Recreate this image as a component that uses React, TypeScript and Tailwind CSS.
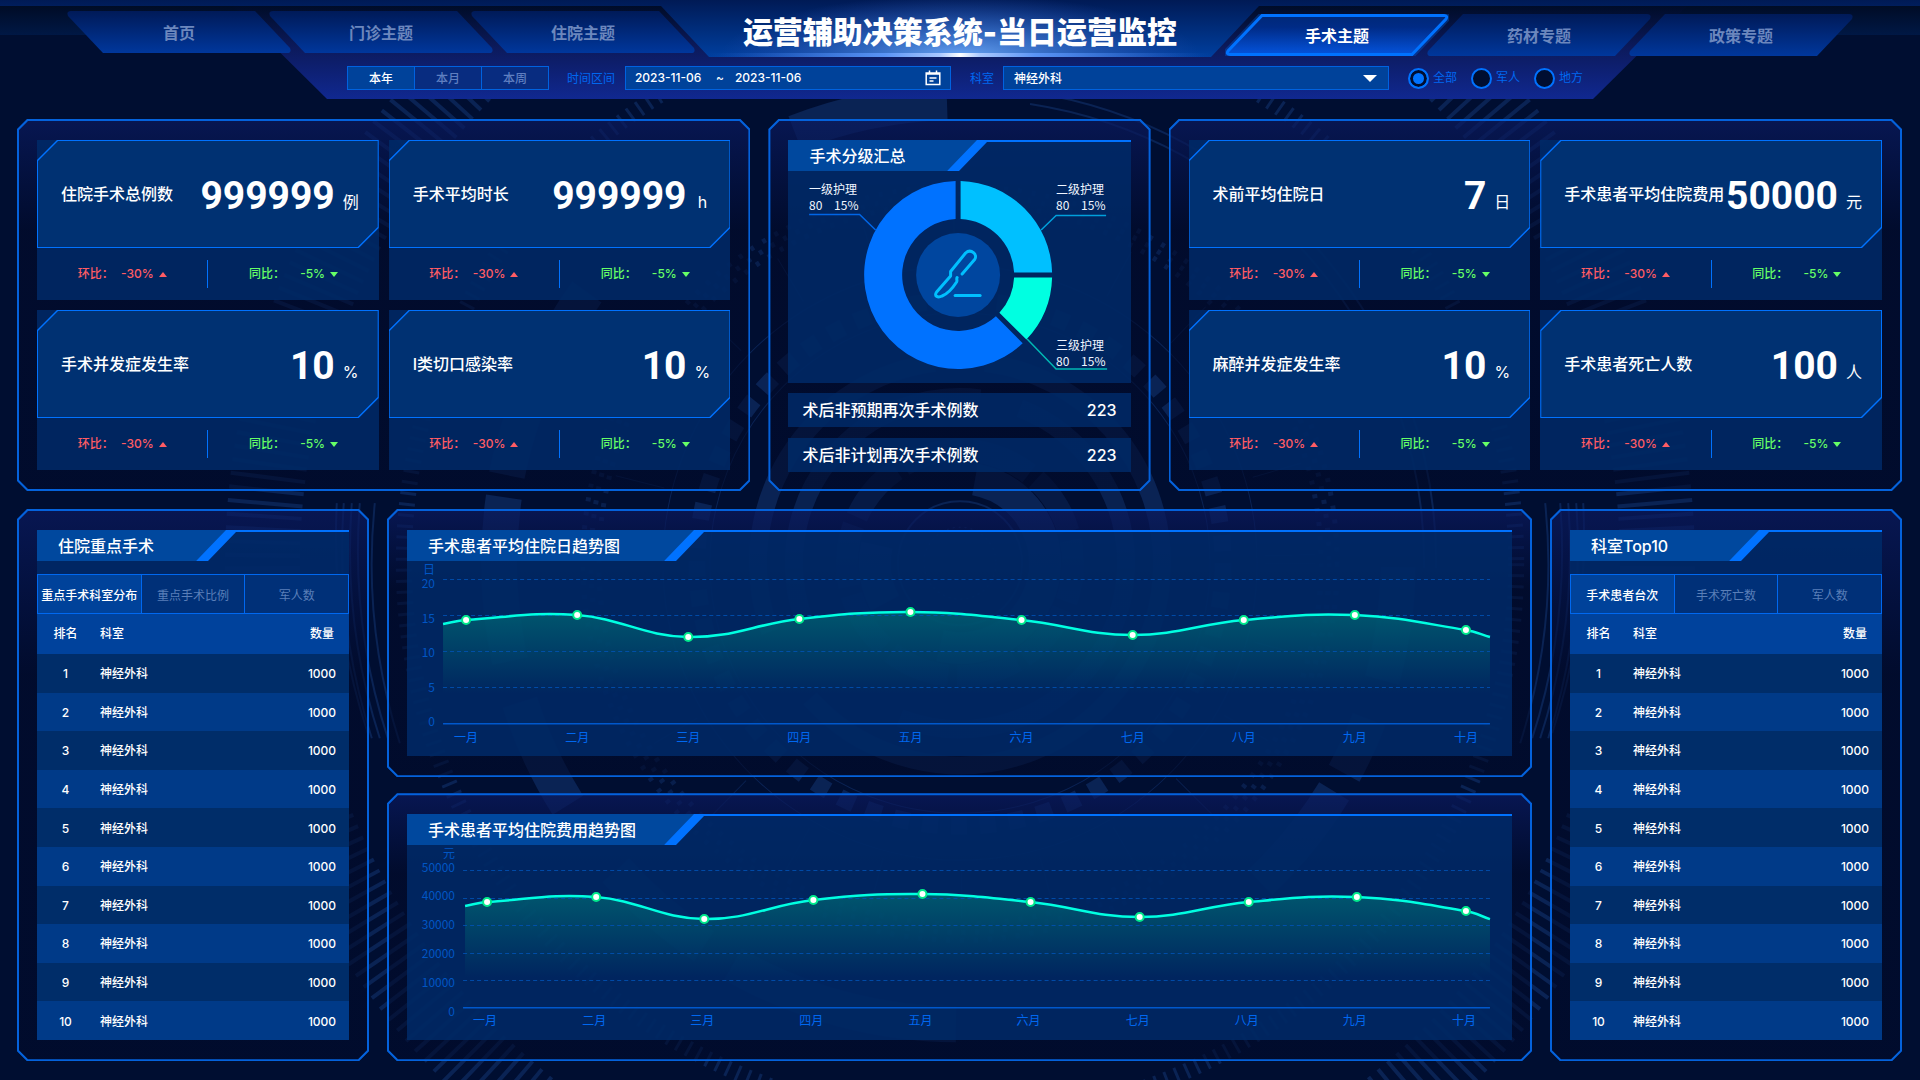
import React, { useState } from "react";
import clsx from "clsx";

type Stat = { label: string; value: string; unit: string };

const leftTabs = ["首页", "门诊主题", "住院主题"];
const rightTabs = ["手术主题", "药材专题", "政策专题"];
const ranges = ["本年", "本月", "本周"];
const scopes = ["全部", "军人", "地方"];
const months = ["一月", "二月", "三月", "四月", "五月", "六月", "七月", "八月", "九月", "十月"];

const leftStats: Stat[] = [
  { label: "住院手术总例数", value: "999999", unit: "例" },
  { label: "手术平均时长", value: "999999", unit: "h" },
  { label: "手术并发症发生率", value: "10", unit: "%" },
  { label: "I类切口感染率", value: "10", unit: "%" },
];

const rightStats: Stat[] = [
  { label: "术前平均住院日", value: "7", unit: "日" },
  { label: "手术患者平均住院费用", value: "50000", unit: "元" },
  { label: "麻醉并发症发生率", value: "10", unit: "%" },
  { label: "手术患者死亡人数", value: "100", unit: "人" },
];

const ranking = Array.from({ length: 10 }, (_, i) => ({
  rank: i + 1,
  name: "神经外科",
  count: 1000,
}));

// faint radar drawing behind the whole page
const Backdrop = () => (
  <svg
    className="absolute inset-0 -z-10 h-full w-full"
    viewBox="0 0 1920 1080"
    preserveAspectRatio="xMidYMid slice"
    fill="none"
    stroke="#0a2354"
    aria-hidden="true"
  >
    <g transform="translate(960 563)">
      <circle r="36" strokeDasharray="2 4" />
      <circle r="62" strokeWidth="2" />
      <path d="M85 0A85 85 0 0 1 -20 82.6M-75 40A85 85 0 0 1 -83 -18M15 -83.7A85 85 0 0 1 85 0" strokeWidth="32" />
      <circle r="113" strokeWidth="22" strokeDasharray="62 9" transform="rotate(60)" opacity=".6" />
      <path d="M166 0A166 166 0 0 1 -60 154.8M-156 57A166 166 0 0 1 20 -164.8M60 -154.8A166 166 0 0 1 166 0" strokeWidth="18" opacity=".9" />
      <path d="M202 0A202 202 0 0 1 -150 135.3M-190 68.6A202 202 0 0 1 -25 -200.4M25 -200.4A202 202 0 0 1 202 0" strokeWidth="18" />
      <circle r="250" />
      <circle r="263" strokeWidth="17" strokeDasharray="16 13" />
      <circle r="297" />
      <circle r="361" strokeWidth="5" strokeDasharray="4 10" opacity=".8" />
      <circle r="369" strokeWidth="5" strokeDasharray="4 10" opacity=".8" />
      <circle r="377" strokeWidth="5" strokeDasharray="4 10" opacity=".8" />
      <circle r="330" strokeWidth="50" strokeDasharray="1 85" opacity=".8" />
      {/* broken wide ring */}
      <path
        d="M-456 -66A461 461 0 0 0 -450 98M-440 139A461 461 0 0 0 -392 242M-344 307A461 461 0 0 0 -256 383M-227 401A461 461 0 0 0 -4 461M-453 -88A461 461 0 0 1 -436 -150M-421 -187A461 461 0 0 1 -373 -271M-165 -430A461 461 0 0 1 -13 -461"
        strokeWidth="36"
      />
      <path d="M438 4A438 438 0 0 1 422 117M409 156A438 438 0 0 1 384 210M374 228A438 438 0 0 1 300 319" strokeWidth="35" />
      <path d="M70 -459A464 464 0 0 1 464 5M70 -471A476 476 0 0 1 476 5" strokeWidth="2" />
      <circle r="556" strokeWidth="16" strokeDasharray="3 8" />
      <path d="M-585 -60A588 588 0 0 0 -560 180M-600 -60A603 603 0 0 0 -572 175M-608 -60A611 611 0 0 0 -580 175M-616 -60A619 619 0 0 0 -588 175M-623 -60A626 626 0 0 0 -592 170" strokeWidth="2" />
      <path d="M585 -60A588 588 0 0 1 560 180M600 -60A603 603 0 0 1 572 175M608 -60A611 611 0 0 1 580 175M616 -60A619 619 0 0 1 588 175M623 -60A626 626 0 0 1 592 170" strokeWidth="2" />
      <g strokeWidth="75">
        <path d="M-697 20A697 697 0 0 1 -440 -540" strokeDasharray="4 9" />
        <path d="M697 20A697 697 0 0 0 440 -540" strokeDasharray="4 9" />
        <path d="M-680 140A694 694 0 0 0 -420 552" strokeDasharray="4 9" />
        <path d="M680 140A694 694 0 0 1 420 552" strokeDasharray="4 9" />
      </g>
    </g>
  </svg>
);

type TabProps = { label: string; active?: boolean; mirrored?: boolean };

const TopicTab = ({ label, active, mirrored }: TabProps) => (
  <a
    href="#"
    aria-current={active ? "page" : undefined}
    className={clsx(
      "relative flex h-[42px] w-[224px] items-center justify-center pt-0.5 text-base font-bold",
      active ? "text-white" : "text-[#6c87bd]"
    )}
  >
    <svg
      className={clsx("absolute inset-0 -z-10 h-full w-full", mirrored && "-scale-x-100")}
      viewBox="0 0 224 42"
      fill="none"
      aria-hidden="true"
    >
      <defs>
        <linearGradient id="tab" x1="0" y1="0" x2="0" y2="1">
          <stop offset="0" stopColor="#001a58" />
          <stop offset="1" stopColor="#00379c" />
        </linearGradient>
        <linearGradient id="tabActive" x1="0" y1="0" x2="0" y2="1">
          <stop offset="0" stopColor="#002878" />
          <stop offset=".3" stopColor="#002b86" />
          <stop offset="1" stopColor="#0453dc" />
        </linearGradient>
      </defs>
      {active ? (
        <>
          <path d="M5 1.5H187L221 37Q223 40.500 219 40.500H37L3 5Q1 1.500 5 1.500Z" fill="url(#tabActive)" stroke="#0060e0" strokeWidth="7" opacity=".35" />
          <path d="M5 1.500H187L221 37Q223 40.500 219 40.500H37L3 5Q1 1.500 5 1.500Z" fill="url(#tabActive)" stroke="#0072ff" strokeWidth="3" />
        </>
      ) : (
        <path d="M4 0H188L223 37Q225 42 220 42H36L1 5Q-1 0 4 0Z" fill="url(#tab)" />
      )}
    </svg>
    {label}
  </a>
);

const Header = () => {
  const [range, setRange] = useState("本年");

  return (
    <header className="relative isolate h-[99px]">
      <svg
        className="absolute inset-0 -z-20 h-full w-full"
        viewBox="0 0 1920 99"
        preserveAspectRatio="none"
        aria-hidden="true"
      >
        <defs>
          <linearGradient id="band" x1="0" y1="0" x2="0" y2="1">
            <stop offset="0" stopColor="#000c26" />
            <stop offset="1" stopColor="#001845" />
          </linearGradient>
          <linearGradient id="filters" x1="0" y1="0" x2="0" y2="1">
            <stop offset="0" stopColor="#000c28" />
            <stop offset=".45" stopColor="#0c1a5c" />
            <stop offset="1" stopColor="#102890" />
          </linearGradient>
          <linearGradient id="crown" x1="0" y1="0" x2="0" y2="1">
            <stop offset="0" stopColor="#001a55" />
            <stop offset="1" stopColor="#003f9f" />
          </linearGradient>
          <radialGradient id="glow" gradientUnits="userSpaceOnUse" cx="0" cy="0" r="1" gradientTransform="translate(960 57) scale(240 62)">
            <stop offset="0" stopColor="#6aa6f5" />
            <stop offset=".45" stopColor="#3a6fc8" stopOpacity=".75" />
            <stop offset="1" stopColor="#2a4fb0" stopOpacity="0" />
          </radialGradient>
          <linearGradient id="shine" x1="0" y1="0" x2="1" y2="0">
            <stop offset="0" stopColor="#1f5fd0" stopOpacity="0" />
            <stop offset=".35" stopColor="#5a94f5" />
            <stop offset=".46" stopColor="#a9c8ff" />
            <stop offset=".5" stopColor="#ffffff" />
            <stop offset=".54" stopColor="#a9c8ff" />
            <stop offset=".65" stopColor="#5a94f5" />
            <stop offset="1" stopColor="#1f5fd0" stopOpacity="0" />
          </linearGradient>
        </defs>
        <path d="M0 6H1920V35H0Z" fill="url(#band)" />
        <path d="M233 6H1687L1593 99H327Z" fill="url(#filters)" />
        <path d="M0 0H1920V6H1259L1211 57H709L661 6H0Z" fill="url(#crown)" />
        <path d="M640 0H1280L1211 57H709Z" fill="url(#glow)" />
        <path d="M709 53H1211V57H709Z" fill="url(#shine)" />
      </svg>

      <div className="flex justify-between px-[67px]">
        <nav aria-label="主题" className="flex flex-1 -space-x-[22px] pt-[11px]">
          {leftTabs.map((t) => (
            <TopicTab key={t} label={t} />
          ))}
        </nav>
        <h1 className="flex h-16 items-center text-[30px] leading-none font-black whitespace-nowrap text-white">
          运营辅助决策系统-当日运营监控
        </h1>
        <nav aria-label="专题" className="flex flex-1 justify-end -space-x-[22px] pt-[14px]">
          {rightTabs.map((t, i) => (
            <TopicTab key={t} label={t} active={i === 0} mirrored />
          ))}
        </nav>
      </div>

      <form className="-mt-px flex items-center justify-center gap-[19px] pt-[3px] pl-[10px] text-xs text-[#0068f0]">
        <div className="flex">
          {ranges.map((r) => (
            <button
              key={r}
              type="button"
              onClick={() => setRange(r)}
              className={clsx(
                "-mr-px h-6 w-[68px] border border-[#0062e0] pt-0.5 font-medium",
                r === range ? "bg-[#00429a] text-white" : "bg-[#082c80] text-[#5f7fc0]"
              )}
            >
              {r}
            </button>
          ))}
        </div>
        <div className="flex items-center gap-[10px]">
          <label htmlFor="from" className="pt-0.5">时间区间</label>
          <div className="flex h-6 w-[326px] items-center border border-[#0062e0] bg-[#00429a] px-[9px] font-medium text-white">
            <input id="from" defaultValue="2023-11-06" className="w-[70px] bg-transparent outline-none" />
            <span className="w-[30px] text-center">~</span>
            <input aria-label="结束日期" defaultValue="2023-11-06" className="min-w-0 flex-1 bg-transparent outline-none" />
            <svg className="h-4 w-4" viewBox="0 0 16 16" fill="none" stroke="#fff" strokeWidth="1.500" aria-hidden="true">
              <path d="M1.200 3H14.800V14.500H1.200ZM4.500 0.500V4M11.500 0.500V4M1.200 4H14.800M4.500 8H11.500M4.500 11H8.500" />
            </svg>
          </div>
        </div>
        <div className="flex items-center gap-[9px]">
          <label htmlFor="dept" className="pt-0.5">科室</label>
          <div className="relative">
            <select
              id="dept"
              className="block h-6 w-[386px] appearance-none border border-[#0062e0] bg-[#00429a] px-[10px] pt-0.5 font-medium text-white outline-none"
            >
              <option>神经外科</option>
            </select>
            <svg className="pointer-events-none absolute top-[9px] right-3 h-[7px] w-[14px]" viewBox="0 0 14 7" aria-hidden="true">
              <path d="M0 0H14L7 7Z" fill="#fff" />
            </svg>
          </div>
        </div>
        <div className="flex gap-[14px]">
          {scopes.map((s, i) => (
            <label key={s} className="flex items-center gap-1">
              <input
                type="radio"
                name="scope"
                defaultChecked={i === 0}
                className="size-[21px] appearance-none rounded-full border-2 border-[#0072ff] bg-[#000e31] checked:bg-[#0072ff] checked:shadow-[inset_0_0_0_3px_#000e31]"
              />
              {s}
            </label>
          ))}
        </div>
      </form>
    </header>
  );
};

// chamfered frame
const Panel = ({ children }: { children: React.ReactNode }) => (
  <section className="relative px-5 py-[21px]">
    <div className="absolute inset-0 -z-10 bg-linear-to-b from-[#0b1a60]/70 via-[#020a2a]/60 via-30% to-[#010a2a]/60 [clip-path:polygon(0_10px,10px_0,calc(100%-10px)_0,100%_10px,100%_calc(100%-10px),calc(100%-10px)_100%,10px_100%,0_calc(100%-10px))]" />
    <div className="absolute inset-0 -z-10 bg-[#0462dc] [clip-path:polygon(evenodd,0_10px,10px_0,calc(100%-10px)_0,100%_10px,100%_calc(100%-10px),calc(100%-10px)_100%,10px_100%,0_calc(100%-10px),0_10px,2px_11px,2px_calc(100%-11px),11px_calc(100%-2px),calc(100%-11px)_calc(100%-2px),calc(100%-2px)_calc(100%-11px),calc(100%-2px)_11px,calc(100%-11px)_2px,11px_2px,2px_11px,0_10px)]" />
    {children}
  </section>
);

const BoxTitle = ({ children, wide }: { children: React.ReactNode; wide?: boolean }) => (
  <div className="flex h-[31px]">
    <h2
      className={clsx(
        "flex shrink-0 items-center bg-[#00489e] pl-[21px] text-base font-medium text-white",
        wide ? "w-[257px]" : "w-[159px]"
      )}
    >
      <span className="whitespace-nowrap">{children}</span>
    </h2>
    <svg className="h-[31px] w-[42px] shrink-0" viewBox="0 0 42 31" aria-hidden="true">
      <path d="M0 0H32L0 31Z" fill="#00489e" />
      <path d="M30 0H42V2H40L12 31H0Z" fill="#0072ff" />
    </svg>
    <div className="h-[2px] flex-1 bg-[#0072ff]" />
  </div>
);

const StatCard = ({ label, value, unit }: Stat) => (
  <div className="bg-[#002a68]/85">
    <div className="relative isolate flex h-[108px] items-center justify-between pr-5 pl-6 text-white">
      <div className="absolute inset-0 -z-10 bg-[#003172] [clip-path:polygon(0_20px,20px_0,100%_0,100%_calc(100%-20px),calc(100%-20px)_100%,0_100%)]" />
      <div className="absolute inset-0 -z-10 bg-[#0072ff] [clip-path:polygon(evenodd,0_20px,20px_0,100%_0,100%_calc(100%-20px),calc(100%-20px)_100%,0_100%,0_20px,1px_21px,1px_calc(100%-1px),calc(100%-21px)_calc(100%-1px),calc(100%-1px)_calc(100%-21px),calc(100%-1px)_1px,21px_1px,1px_21px,0_20px)]" />
      <h3 className="text-base font-medium whitespace-nowrap">{label}</h3>
      <p className="flex items-end gap-2 pt-1">
        <span className="font-[Roboto] text-[39px] leading-none font-bold">{value}</span>
        <span className="w-4 pb-0.5 text-center text-base whitespace-nowrap">{unit}</span>
      </p>
    </div>
    <div className="flex h-[52px] items-center text-xs font-medium">
      <p className="flex flex-1 items-center justify-center text-[#ff5c64]">
        环比：<span className="w-10 text-right">-30%</span>
        <svg className="ml-[5px] h-[5px] w-2" viewBox="0 0 8 5" aria-hidden="true">
          <path d="M4 0L8 5H0Z" fill="currentColor" />
        </svg>
      </p>
      <div className="h-7 w-px bg-[#0072ff]" />
      <p className="flex flex-1 items-center justify-center text-[#66ff66]">
        同比：<span className="w-10 text-right">-5%</span>
        <svg className="ml-[5px] h-[5px] w-2" viewBox="0 0 8 5" aria-hidden="true">
          <path d="M4 5L0 0H8Z" fill="currentColor" />
        </svg>
      </p>
    </div>
  </div>
);

const StatGrid = ({ stats }: { stats: Stat[] }) => (
  <div className="grid grid-cols-2 gap-[10px]">
    {stats.map((s) => (
      <StatCard key={s.label} {...s} />
    ))}
  </div>
);

const LevelDonut = () => (
  <svg className="block h-[212px] w-full" viewBox="0 0 342 212" role="img" aria-label="手术分级汇总">
    <g transform="translate(170 104)">
      <path d="M2.500 -94A94 94 0 0 1 94 -2.500L56 -2.500A56 56 0 0 0 2.500 -56Z" fill="#00c0ff" />
      <path d="M94 2.500A94 94 0 0 1 68.300 64.600L41.300 37.800A56 56 0 0 0 56 2.500Z" fill="#00ffe1" />
      <path d="M64.600 68.300A94 94 0 1 1 -2.500 -94L-2.500 -56A56 56 0 1 0 37.800 41.300Z" fill="#0072ff" />
      <circle r="42" fill="#00469f" />
      <g fill="none" stroke="#00c0ff" strokeWidth="3" strokeLinecap="round" strokeLinejoin="round">
        <path d="M4 -1L16.500 -15.500C20 -20 13 -27 7.500 -22L-7.500 -3.500V1L-21.500 17C-24.500 21.500 -20 23 -16 21C-10 18.500 -5 12.500 -1.500 7C-0.500 5 -2 4.500 -1 2.500" />
        <path d="M-3 20.500H22" />
      </g>
    </g>
    <g fill="none" strokeWidth="1.500">
      <path d="M21 43.500H71.500L87.500 59" stroke="#0066e6" />
      <path d="M318 44.500H268L253 59" stroke="#00a0dc" />
      <path d="M319 198H268L239 168" stroke="#00b8b4" />
    </g>
    <g fill="#f0f6ff" fontSize="12" fontFamily="'Noto Sans CJK SC', sans-serif">
      <text x="21" y="23">一级护理</text>
      <text x="21" y="39">80</text>
      <text x="46" y="39">15%</text>
      <text x="268" y="23">二级护理</text>
      <text x="268" y="39">80</text>
      <text x="293" y="39">15%</text>
      <text x="268" y="179">三级护理</text>
      <text x="268" y="195">80</text>
      <text x="293" y="195">15%</text>
    </g>
  </svg>
);

const CountRow = ({ label, value }: { label: string; value: string }) => (
  <p className="flex h-[34px] items-center justify-between bg-[#002a68]/85 px-[14px] text-base font-medium text-white">
    <span>{label}</span>
    <span>{value}</span>
  </p>
);

type ChartProps = {
  id: string;
  unit: string;
  axisX: number;
  startX: number;
  ticks: { label: string; y: number; line: number }[];
  base: number;
  zeroY: number;
  unitY: number;
  monthY: number;
  monthShift: number;
  points: [number, number][];
};

function smooth(pts: [number, number][]) {
  let d = `M${pts[0][0]} ${pts[0][1]}`;
  const slope = (i: number) => {
    const a = pts[Math.max(i - 1, 0)];
    const b = pts[Math.min(i + 1, pts.length - 1)];
    return (b[1] - a[1]) / (b[0] - a[0]);
  };
  for (let i = 0; i < pts.length - 1; i++) {
    const [x0, y0] = pts[i];
    const [x1, y1] = pts[i + 1];
    const h = (x1 - x0) * 0.4;
    d += `C${x0 + h} ${y0 + slope(i) * h} ${x1 - h} ${y1 - slope(i + 1) * h} ${x1} ${y1}`;
  }
  return d;
}

const TrendChart = (props: ChartProps) => {
  const { id, unit, axisX, startX, ticks, base, zeroY, unitY, monthY, monthShift, points } = props;
  const line = smooth(points);
  const top = Math.min(...points.map((p) => p[1]));

  return (
    <svg className="block w-full overflow-visible" viewBox="0 0 1104 195" role="img" aria-label={unit}>
      <defs>
        <linearGradient id={id} gradientUnits="userSpaceOnUse" x1="0" y1={top} x2="0" y2={base - 30}>
          <stop offset="0" stopColor="#00c890" stopOpacity=".3" />
          <stop offset="1" stopColor="#00c890" stopOpacity="0" />
        </linearGradient>
      </defs>
      <path d={`${line}V${base - 20}H${startX}Z`} fill={`url(#${id})`} />
      {ticks.map((t) => (
        <path key={t.label} d={`M${axisX} ${t.line}H1082`} stroke="#0054b8" strokeOpacity=".8" strokeDasharray="4 3" />
      ))}
      <path d={`M${axisX} ${base}H1082`} stroke="#0058cc" strokeWidth="1.500" />
      <path d={line} fill="none" stroke="#00ffe1" strokeWidth="2.500" />
      {points.slice(1, -1).map(([x, y]) => (
        <circle key={x} cx={x} cy={y} r="4" fill="#fff" stroke="#00e98c" strokeWidth="2" />
      ))}
      <g fill="#0056c4" fontSize="12" fontFamily="'Noto Sans CJK SC', sans-serif" textAnchor="end">
        <text x={axisX - 8} y={unitY}>{unit}</text>
        {ticks.map((t) => (
          <text key={t.label} x={axisX - 8} y={t.y}>{t.label}</text>
        ))}
        <text x={axisX - 8} y={zeroY}>0</text>
      </g>
      <g fill="#0068f0" fontSize="12" fontFamily="'Noto Sans CJK SC', sans-serif" textAnchor="middle">
        {months.map((m, i) => (
          <text key={m} x={points[i + 1][0] - monthShift} y={monthY}>{m}</text>
        ))}
      </g>
    </svg>
  );
};

const RankPanel = ({ title, tabs }: { title: string; tabs: string[] }) => {
  const [tab, setTab] = useState(tabs[0]);

  return (
    <Panel>
      <div className="bg-[#002a68]/85">
        <BoxTitle>{title}</BoxTitle>
        <div className="mt-[13px] grid grid-cols-3 border-l border-[#0068f0]">
          {tabs.map((t) => (
            <button
              key={t}
              type="button"
              onClick={() => setTab(t)}
              className={clsx(
                "h-10 border-y border-r border-[#0068f0] pt-1 text-xs whitespace-nowrap",
                t === tab ? "bg-[#00429a] font-medium text-white" : "bg-[#003078] text-[#5a7fb8]"
              )}
            >
              {t}
            </button>
          ))}
        </div>
        <table className="h-[426px] w-full text-xs font-medium text-white">
          <thead>
            <tr className="h-10 bg-[#00429c]">
              <th className="w-[57px] font-medium">排名</th>
              <th className="pl-[6px] text-left font-medium">科室</th>
              <th className="w-[54px] font-medium">数量</th>
            </tr>
          </thead>
          <tbody>
            {ranking.map((r) => (
              <tr key={r.rank} className="odd:bg-[#002d69] even:bg-[#003a88]">
                <td className="pt-0.5 text-center">{r.rank}</td>
                <td className="pt-0.5 pl-[6px]">{r.name}</td>
                <td className="pt-0.5 text-center">{r.count}</td>
              </tr>
            ))}
          </tbody>
        </table>
      </div>
    </Panel>
  );
};

export default function App() {
  return (
    <div className="relative isolate min-h-screen overflow-hidden bg-[#000e31] pb-[19px] font-[Inter,'Noto_Sans_CJK_SC',sans-serif]">
      <Backdrop />
      <Header />
      <main className="mt-5 flex flex-col gap-[18px] pr-[18px] pl-[17px]">
        <div className="grid grid-cols-[733fr_382fr_733fr] gap-[18px]">
          <Panel>
            <StatGrid stats={leftStats} />
          </Panel>
          <Panel>
            <div className="bg-[#002a68]/85">
              <BoxTitle>手术分级汇总</BoxTitle>
              <LevelDonut />
            </div>
            <div className="mt-[10px] -mb-0.5 flex flex-col gap-[11px]">
              <CountRow label="术后非预期再次手术例数" value="223" />
              <CountRow label="术后非计划再次手术例数" value="223" />
            </div>
          </Panel>
          <Panel>
            <StatGrid stats={rightStats} />
          </Panel>
        </div>

        <div className="grid grid-cols-[352px_1fr_352px] gap-[18px]">
          <RankPanel title="住院重点手术" tabs={["重点手术科室分布", "重点手术比例", "军人数"]} />
          <div className="flex flex-col gap-4">
            <Panel>
              <div className="bg-[#002a68]/85">
                <BoxTitle wide>手术患者平均住院日趋势图</BoxTitle>
                <TrendChart
                  id="days"
                  unit="日"
                  axisX={36}
                  startX={36}
                  base={162.5}
                  zeroY={165}
                  unitY={13}
                  monthY={181}
                  monthShift={0}
                  ticks={[
                    { label: "20", y: 27, line: 18.5 },
                    { label: "15", y: 62, line: 54.5 },
                    { label: "10", y: 96, line: 90.5 },
                    { label: "5", y: 131, line: 126.5 },
                  ]}
                  points={[
                    [36, 63], [59, 59], [170, 54], [281, 76], [392, 58], [503, 51],
                    [614, 59], [725, 74], [836, 59], [947, 54], [1058, 69], [1082, 76],
                  ]}
                />
              </div>
            </Panel>
            <Panel>
              <div className="bg-[#002a68]/85">
                <BoxTitle wide>手术患者平均住院费用趋势图</BoxTitle>
                <TrendChart
                  id="cost"
                  unit="元"
                  axisX={56}
                  startX={58}
                  base={162.5}
                  zeroY={171}
                  unitY={13}
                  monthY={180}
                  monthShift={2}
                  ticks={[
                    { label: "50000", y: 27, line: 25.5 },
                    { label: "40000", y: 55, line: 53.5 },
                    { label: "30000", y: 84, line: 80.5 },
                    { label: "20000", y: 113, line: 108.5 },
                    { label: "10000", y: 142, line: 135.5 },
                  ]}
                  points={[
                    [58, 61], [80, 57], [189, 52], [297, 74], [406, 55], [515, 49],
                    [623, 57], [732, 72], [841, 57], [949, 52], [1058, 66], [1082, 74],
                  ]}
                />
              </div>
            </Panel>
          </div>
          <RankPanel title="科室Top10" tabs={["手术患者台次", "手术死亡数", "军人数"]} />
        </div>
      </main>
    </div>
  );
}
